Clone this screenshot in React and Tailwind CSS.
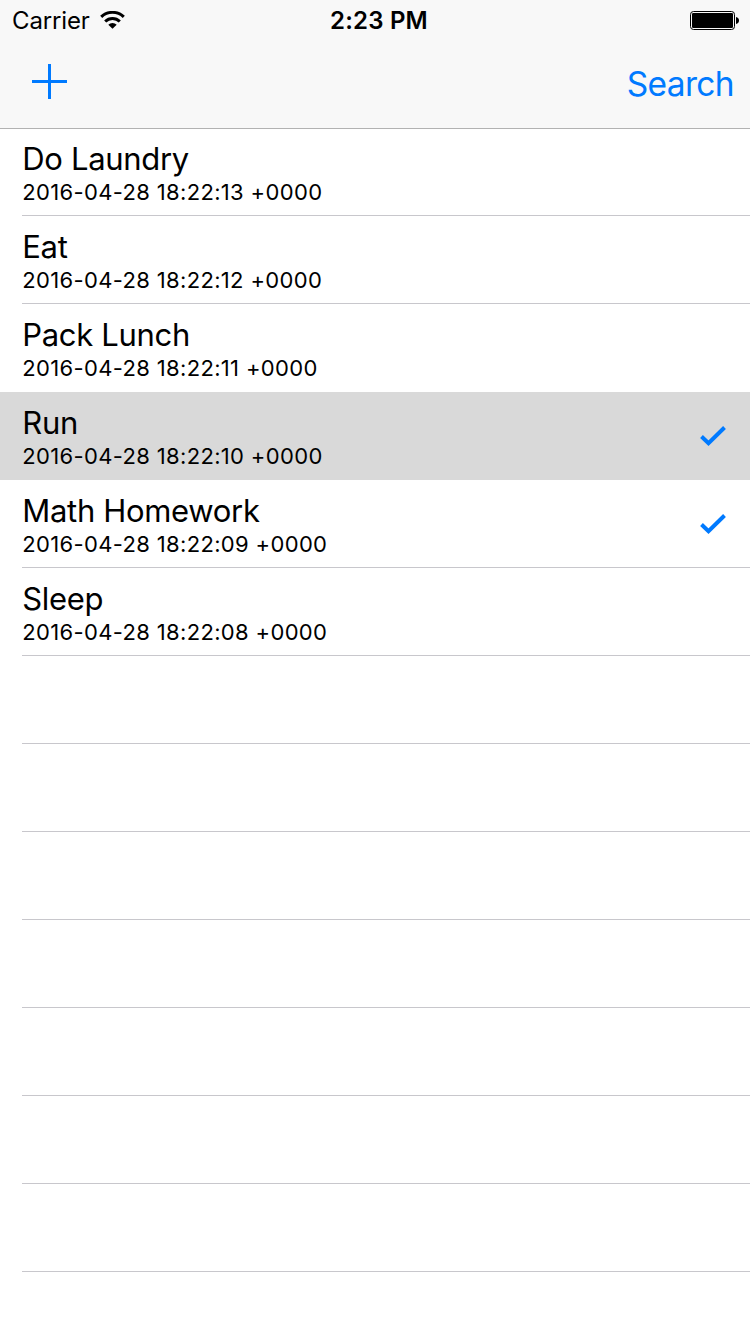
const todos = [
  { title: 'Do Laundry', date: '2016-04-28 18:22:13 +0000' },
  { title: 'Eat', date: '2016-04-28 18:22:12 +0000' },
  { title: 'Pack Lunch', date: '2016-04-28 18:22:11 +0000', noLine: true },
  { title: 'Run', date: '2016-04-28 18:22:10 +0000', done: true, selected: true, noLine: true },
  { title: 'Math Homework', date: '2016-04-28 18:22:09 +0000', done: true },
  { title: 'Sleep', date: '2016-04-28 18:22:08 +0000' },
];

const emptyRows = [0, 1, 2, 3, 4, 5, 6];

function Wifi() {
  return (
    <svg className="ml-[10px] h-[18px] w-[25px]" viewBox="0 0 25 18" fill="none" stroke="#000">
      <path d="M1.200 5.900a16.300 16.300 0 0 1 22.600 0" strokeWidth="3" />
      <path d="M5.200 10.500a10.500 10.500 0 0 1 14.600 0" strokeWidth="3" />
      <path d="M12.500 17.800 8.300 13.700a6 6 0 0 1 8.400 0z" fill="#000" stroke="none" />
    </svg>
  );
}

function Battery() {
  return (
    <svg className="h-[19px] w-[50px]" viewBox="0 0 50 19">
      <rect x="0.5" y="0.5" width="44" height="18" rx="3" fill="none" stroke="#000" />
      <rect x="2" y="2" width="41" height="15" rx="1.2" fill="#000" />
      <path d="M46 6c2 .4 3 1.700 3 3.500s-1 3.100-3 3.500z" fill="#000" />
    </svg>
  );
}

function Check() {
  return (
    <svg className="mr-[24px] h-[22px] w-[26px]" viewBox="0 0 26 22" fill="none" stroke="#007aff">
      <path d="M1.500 11.500 8.500 18.200 24.500 2.500" strokeWidth="4" />
    </svg>
  );
}

function Row({ todo }) {
  return (
    <li className={todo.selected ? 'flex h-[88px] bg-[#d9d9d9] pl-[22px]' : 'flex h-[88px] pl-[22px]'}>
      <div
        className={
          todo.noLine
            ? 'flex flex-1 items-center justify-between border-b border-transparent'
            : 'flex flex-1 items-center justify-between border-b border-[#c8c7cc]'
        }
      >
        <div className="flex h-full flex-col pt-[11px] pl-[0.3px]">
          <span className="mb-px text-[31px] leading-[39px] tracking-[-0.32px]">{todo.title}</span>
          <span className="text-[22px] leading-[26px] tracking-[0.34px]">{todo.date}</span>
        </div>
        {todo.done && <Check />}
      </div>
    </li>
  );
}

export default function App() {
  return (
    <div className="flex h-[1334px] w-[750px] flex-col overflow-hidden bg-white font-['Inter',sans-serif] text-black">
      <header className="z-10 -mb-px flex h-[129px] shrink-0 flex-col border-b border-[#b2b2b2] bg-[#f8f8f8]">
        <div className="grid h-[40px] grid-cols-3 items-center">
          <div className="flex items-center pl-[12px]">
            <span className="pt-[2px] text-[24px] leading-[36px] tracking-[-0.15px]">Carrier</span>
            <Wifi />
          </div>
          <span className="pt-[2px] pl-[8px] text-center text-[24px] leading-[36px] font-[560] tracking-[0.2px]">2:23 PM</span>
          <div className="flex justify-end pr-[10px]">
            <Battery />
          </div>
        </div>
        <div className="flex h-[88px] items-center justify-between pr-[16px] pl-[32px]">
          <button aria-label="Add">
            <svg className="mb-[6px] h-[35px] w-[35px]" viewBox="0 0 35 35" fill="#007aff">
              <path d="M16 0h3v16h16v3H19v16h-3V19H0v-3h16z" />
            </svg>
          </button>
          <button className="text-[33.5px] leading-[40px] tracking-[-0.65px] text-[#007aff]">Search</button>
        </div>
      </header>
      <ul className="flex flex-col">
        {todos.map((todo) => (
          <Row key={todo.title} todo={todo} />
        ))}
        {emptyRows.map((n) => (
          <li key={n} className="ml-[22px] h-[88px] border-b border-[#c8c7cc]" />
        ))}
      </ul>
    </div>
  );
}
